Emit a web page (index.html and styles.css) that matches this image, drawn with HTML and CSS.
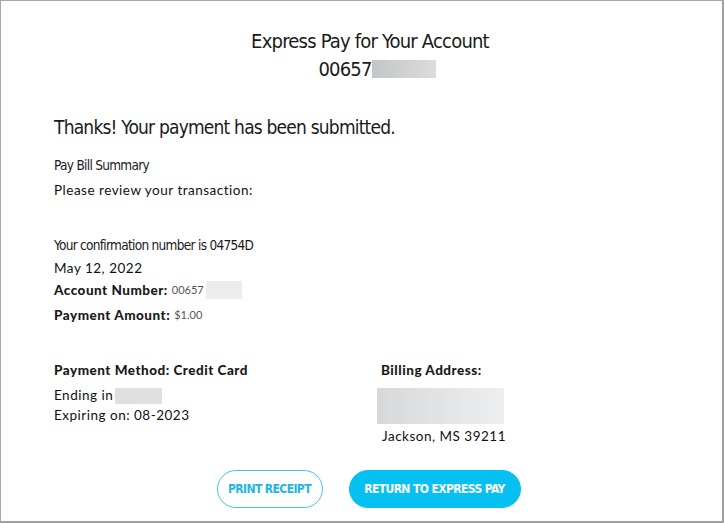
FILE: index.html
```html
<!DOCTYPE html>
<html lang="en">
<head>
<meta charset="utf-8">
<title>Express Pay</title>
<link rel="stylesheet" href="styles.css">
</head>
<body>
<div class="frame">
  <header class="head">
    <h1 class="head-title">Express Pay for Your Account</h1>
    <div class="head-acct">00657<span class="mask mask-head"></span></div>
  </header>

  <main class="content">
    <h2 class="thanks">Thanks! Your payment has been submitted.</h2>
    <div class="cond-label">Pay Bill Summary</div>
    <div class="body-text review">Please review your transaction:</div>

    <div class="cond-label confirm">Your confirmation number is 04754D</div>
    <div class="body-text date">May 12, 2022</div>
    <div class="kv kv-first"><span class="key">Account Number:</span> <span class="val">00657</span><span class="mask mask-acct"></span></div>
    <div class="kv"><span class="key">Payment Amount:</span> <span class="val">$1.00</span></div>

    <div class="cols">
      <section class="col col-method">
        <div class="key">Payment Method: Credit Card</div>
        <div class="body-text ending">Ending in <span class="mask mask-card"></span></div>
        <div class="body-text expiring">Expiring on: 08-2023</div>
      </section>
      <section class="col col-billing">
        <div class="key">Billing Address:</div>
        <div class="mask mask-addr"></div>
        <div class="body-text city">Jackson, MS 39211</div>
      </section>
    </div>
  </main>

  <div class="actions">
    <button class="btn btn-outline">PRINT RECEIPT</button>
    <button class="btn btn-fill">RETURN TO EXPRESS PAY</button>
  </div>
</div>
</body>
</html>
```

FILE: styles.css
```css
* { box-sizing: border-box; }
html, body { margin: 0; padding: 0; background: #fff; }
body { width: 724px; height: 523px; overflow: hidden; }

.frame {
  width: 724px;
  height: 523px;
  border-top: 1px solid #a8a8a8;
  border-left: 1px solid #a8a8a8;
  border-right: 2px solid #a0a0a0;
  border-bottom: 2px solid #a0a0a0;
  display: flex;
  flex-direction: column;
  color: #1a1a1a;
}

.head {
  text-align: center;
  padding-top: 26px;
  padding-left: 17px;
}
.head-title {
  margin: 0;
  font-family: "DejaVu Sans Condensed", "Roboto", sans-serif;
  font-weight: normal;
  font-size: 20px;
  line-height: 28px;
  letter-spacing: -0.8px;
  color: #1a1a1a;
}
.head-acct {
  font-family: "DejaVu Sans Condensed", "Roboto", sans-serif;
  font-size: 20px;
  line-height: 28px;
  letter-spacing: -0.8px;
  display: flex;
  justify-content: center;
  align-items: center;
  padding-left: 14px;
}

.mask { display: inline-block; vertical-align: middle; }
.mask-head { width: 64px; height: 18px; background: linear-gradient(90deg, #c4c5c7, #dcdcde); }
.mask-acct { width: 36px; height: 18px; background: #ececec; margin-left: 2px; }
.mask-card { width: 47px; height: 16px; background: #e0e0e0; }
.mask-addr { width: 127px; height: 36px; background: linear-gradient(90deg, #d7d8d9, #eeeff0); margin: 8px 0 0 -4px; }

.content {
  padding: 32px 0 0 53px;
  display: flex;
  flex-direction: column;
}
.thanks {
  margin: 0;
  font-family: "DejaVu Sans Condensed", "Roboto", sans-serif;
  font-weight: normal;
  font-size: 19px;
  line-height: 24px;
  letter-spacing: -0.8px;
}
.cond-label {
  font-family: "DejaVu Sans Condensed", "Roboto", sans-serif;
  font-size: 13.5px;
  line-height: 18px;
  letter-spacing: -0.7px;
  margin-top: 17px;
}
.body-text {
  font-family: "Lato", "Open Sans", sans-serif;
  font-size: 13.5px;
  line-height: 19px;
  letter-spacing: 0.5px;
  color: #111;
}
.review { margin-top: 7px; }
.confirm { margin-top: 36px; }
.date { margin-top: 5px; }
.kv { margin-top: 4px; line-height: 21px; display: flex; align-items: center; }
.kv-first { margin-top: 1px; }
.key {
  font-family: "Lato", "Open Sans", sans-serif;
  font-weight: 900;
  font-size: 13.5px;
  line-height: 20px;
  letter-spacing: 0.5px;
}
.val {
  font-family: "Lato", "Open Sans", sans-serif;
  font-size: 11px;
  color: #555;
  margin-left: 4px;
}

.cols { display: flex; margin-top: 35px; }
.col { display: flex; flex-direction: column; }
.col-method { width: 327px; }
.ending { margin-top: 6px; display: flex; align-items: center; gap: 2px; }
.expiring { margin-top: 1px; }
.city { margin-top: 3px; padding-left: 1px; }

.actions {
  margin-top: auto;
  margin-bottom: 13px;
  display: flex;
  justify-content: center;
  gap: 26px;
  padding-left: 14px;
}
.btn {
  height: 38px;
  border-radius: 19px;
  font-family: "DejaVu Sans Condensed", "Roboto", sans-serif;
  font-weight: bold;
  font-size: 12px;
  letter-spacing: -0.6px;
  white-space: nowrap;
  padding: 0;
  cursor: pointer;
}
.btn-outline { width: 106px; background: #fff; border: 1px solid #49c3ee; color: #22b4e6; }
.btn-fill { width: 172px; background: #06c0f2; border: 1px solid #06c0f2; color: #fff; }
```
